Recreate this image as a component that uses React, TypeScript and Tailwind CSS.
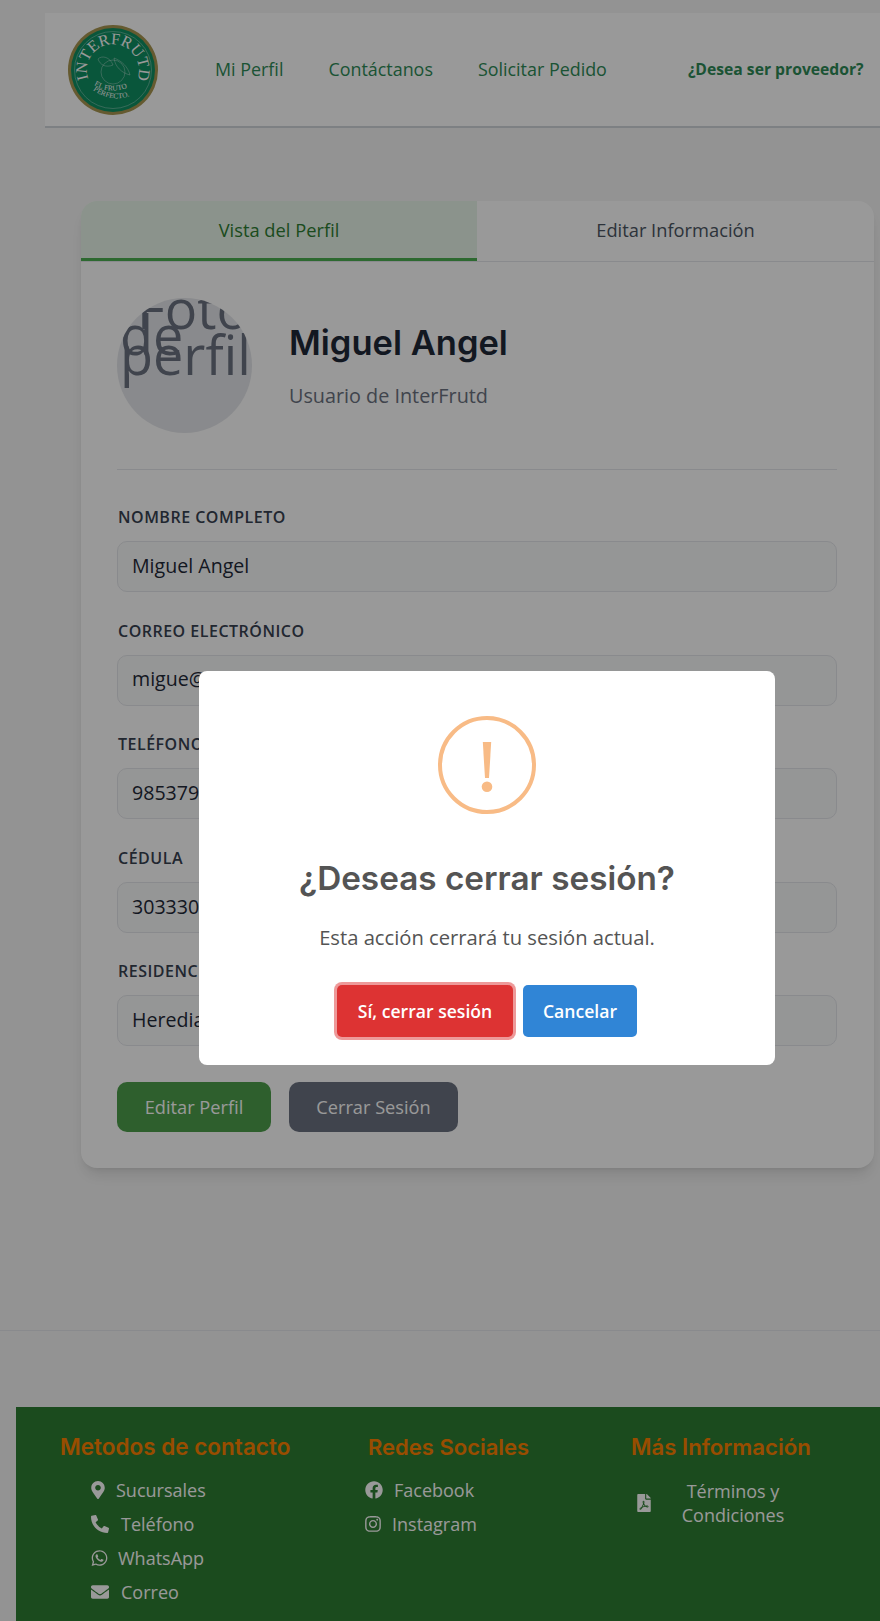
import React from 'react';
import {
  FaMapMarkerAlt,
  FaPhoneAlt,
  FaWhatsapp,
  FaEnvelope,
  FaFacebook,
  FaInstagram,
  FaFilePdf,
} from 'react-icons/fa';

const heading = "font-['Inter',sans-serif]";

const fields = [
  { label: 'NOMBRE COMPLETO', value: 'Miguel Angel' },
  { label: 'CORREO ELECTRÓNICO', value: 'migue@gmail.com' },
  { label: 'TELÉFONO', value: '98537912' },
  { label: 'CÉDULA', value: '303330123' },
  { label: 'RESIDENCIA', value: 'Heredia, Costa Rica' },
];

function Logo() {
  return (
    <svg viewBox="0 0 90 90" className="h-[90px] w-[90px]">
      <defs>
        <path id="logoTop" d="M20.5 54 A26 26 0 1 1 69.5 54" />
        <path id="logoMid" d="M26 60 Q42 70 61 62" />
        <path id="logoLow" d="M25 65 Q45 80 69 68" />
      </defs>
      <circle cx="45" cy="45" r="45" fill="#a89650" />
      <circle cx="45" cy="45" r="42" fill="#108f63" />
      <circle cx="45" cy="45" r="38.5" fill="none" stroke="#ffffff" strokeWidth="0.4" opacity="0.8" />
      <circle cx="45" cy="47" r="12" fill="none" stroke="#ffffff" strokeWidth="0.4" opacity="0.8" />
      <path d="M30 34 C34 30 42 32 45 40 C38 43 32 40 30 34Z" fill="none" stroke="#ffffff" strokeWidth="0.4" opacity="0.8" />
      <path d="M46 33 C54 36 60 42 62 50 C54 48 47 42 46 33Z" fill="none" stroke="#ffffff" strokeWidth="0.4" opacity="0.8" />
      <text fill="#ffffff" fontSize="16" fontFamily="Liberation Serif, serif">
        <textPath href="#logoTop" textLength="100" lengthAdjust="spacingAndGlyphs">INTERFRUTD</textPath>
      </text>
      <text fill="#ffffff" fontSize="7.4" fontFamily="Liberation Serif, serif">
        <textPath href="#logoMid">EL FRUTO</textPath>
      </text>
      <text fill="#ffffff" fontSize="7.4" fontFamily="Liberation Serif, serif">
        <textPath href="#logoLow">PERFECTO.</textPath>
      </text>
    </svg>
  );
}

function WarningIcon() {
  return (
    <svg viewBox="0 0 98 98" className="h-[98px] w-[98px]">
      <circle cx="49" cy="49" r="47" fill="none" stroke="#f8bb86" strokeWidth="4" />
      <path d="M44.8 26 H53.2 L51 62 H47 Z" fill="#f8bb86" />
      <circle cx="49" cy="70.7" r="5.3" fill="#f8bb86" />
    </svg>
  );
}

function Avatar() {
  return (
    <div className="relative h-[135px] w-[135px] shrink-0 overflow-hidden rounded-full bg-[#e5e7eb] text-[54px] leading-[40px] text-[#6b7280]">
      <span className="absolute left-[20px] top-[-10px]">Foto</span>
      <span className="absolute left-[3px] top-[16px]">de</span>
      <span className="absolute left-[3px] top-[36px]">perfil</span>
    </div>
  );
}

function FooterLink({ icon, text, gap }: { icon: React.ReactNode; text: string; gap: string }) {
  return (
    <li className={`flex h-[34px] items-center ${gap}`}>
      {icon}
      <span>{text}</span>
    </li>
  );
}

export default function App() {
  return (
    <div className="relative h-[1621px] overflow-hidden bg-[#f6f6f6] font-['Open_Sans',sans-serif]">
      {/* Header */}
      <header className="ml-[45px] mt-[13px] flex h-[115px] items-center border-b-2 border-[#d1d5db] bg-white pl-[23px]">
        <Logo />
        <nav className="ml-[57px] flex gap-[45px] text-[17.9px] text-[#2e8b57]">
          <a>Mi Perfil</a>
          <a>Contáctanos</a>
          <a>Solicitar Pedido</a>
        </nav>
        <a className="ml-[81px] text-[15.7px] font-bold text-[#2e8b57]">¿Desea ser proveedor?</a>
      </header>

      {/* Profile card */}
      <main className="ml-[81px] mt-[73px] w-[793px] overflow-hidden rounded-2xl bg-white shadow-lg">
        <div className="flex h-[61px] border-b border-[#e5e7eb] text-[18.3px]">
          <div className="flex w-[396px] items-center justify-center border-b-[3px] border-[#4caf50] bg-[#e8f5e9] font-medium text-[#2e7d32]">
            Vista del Perfil
          </div>
          <div className="flex flex-1 items-center justify-center pb-[2px] font-medium text-[#4b5563]">Editar Información</div>
        </div>

        <div className="py-[36px] pl-[36px] pr-[37px]">
          <div className="flex items-center gap-[36px] border-b border-[#e5e7eb] pb-[36px]">
            <Avatar />
            <div className="-mt-[1px] pl-[1px]">
              <h2 className={`${heading} text-[34.5px] font-semibold leading-[48px] text-[#1f2937]`}>Miguel Angel</h2>
              <p className="mt-[14px] text-[19.8px] text-[#6b7280]">Usuario de InterFrutd</p>
            </div>
          </div>

          <div className="mt-[37px] flex flex-col gap-[28.6px]">
            {fields.map((field) => (
              <div key={field.label}>
                <label className="block h-[22px] pl-[1px] text-[16px] font-semibold leading-[20px] tracking-[0.5px] text-[#374151]">
                  {field.label}
                </label>
                <div className="mt-[12px] flex h-[51px] items-center rounded-[10px] border border-[#e5e7eb] bg-[#f9fafb] px-[14px] pb-[2px] text-[19.6px] text-[#1f2937]">
                  {field.value}
                </div>
              </div>
            ))}
          </div>

          <div className="mt-[36px] flex gap-[18px] text-[18.2px] font-medium text-white">
            <button className="h-[50px] w-[154px] rounded-[10px] bg-[#4d9f4b]">Editar Perfil</button>
            <button className="h-[50px] w-[169px] rounded-[10px] bg-[#6b7280]">Cerrar Sesión</button>
          </div>
        </div>
      </main>

      {/* Footer */}
      <div className="mt-[162px] h-[77px] border-t border-[#e5e7eb] bg-[#f5f5f5]" />
      <footer className="ml-[16px] flex h-[214px] bg-[#2e7d32] pt-[26px] text-[18px] text-white">
        <div className="ml-[44px] w-[308px]">
          <h3 className={`${heading} text-[22.5px] font-semibold leading-[28px] text-[#ff8000]`}>Metodos de contacto</h3>
          <ul className="ml-[31px] mt-[12px]">
            <FooterLink icon={<FaMapMarkerAlt className="h-[18px] w-[14px]" />} text="Sucursales" gap="gap-[11px]" />
            <FooterLink icon={<FaPhoneAlt className="h-[18px] w-[18px]" />} text="Teléfono" gap="gap-[12px]" />
            <FooterLink icon={<FaWhatsapp className="h-[18px] w-[17px]" />} text="WhatsApp" gap="gap-[10px]" />
            <FooterLink icon={<FaEnvelope className="h-[18px] w-[18px]" />} text="Correo" gap="gap-[12px]" />
          </ul>
        </div>
        <div className="w-[263px]">
          <h3 className={`${heading} text-[22px] font-semibold leading-[28px] text-[#ff8000]`}>Redes Sociales</h3>
          <ul className="-ml-[3px] mt-[12px]">
            <FooterLink icon={<FaFacebook className="h-[18px] w-[18px]" />} text="Facebook" gap="gap-[11px]" />
            <FooterLink icon={<FaInstagram className="h-[18px] w-[16px]" />} text="Instagram" gap="gap-[11px]" />
          </ul>
        </div>
        <div>
          <h3 className={`${heading} text-[22.2px] font-semibold leading-[28px] text-[#ff8000]`}>Más Información</h3>
          <div className="ml-[6px] mt-[18px] flex items-center gap-[24px]">
            <FaFilePdf className="h-[18px] w-[14px]" />
            <span className="w-[116px] text-center leading-[24px]">Términos y Condiciones</span>
          </div>
        </div>
      </footer>

      {/* Logout dialog */}
      <div className="absolute inset-0 bg-black/40" />
      <div className="absolute left-[199px] top-[671px] flex h-[394px] w-[576px] flex-col items-center rounded-lg bg-white pt-[45px]">
        <WarningIcon />
        <h2 className={`${heading} mt-[42px] text-[33.3px] font-semibold leading-[44px] text-[#545454]`}>¿Deseas cerrar sesión?</h2>
        <p className="mt-[23px] text-[20.2px] leading-[28px] text-[#545454]">Esta acción cerrará tu sesión actual.</p>
        <div className="mt-[34px] flex gap-[10px] text-[17.6px] font-semibold text-white">
          <button className="h-[52px] w-[176px] rounded-[5px] bg-[#dd3333] shadow-[0_0_0_3px_rgba(221,51,51,0.5)]">Sí, cerrar sesión</button>
          <button className="h-[52px] w-[114px] rounded-[5px] bg-[#3085d6]">Cancelar</button>
        </div>
      </div>
    </div>
  );
}
